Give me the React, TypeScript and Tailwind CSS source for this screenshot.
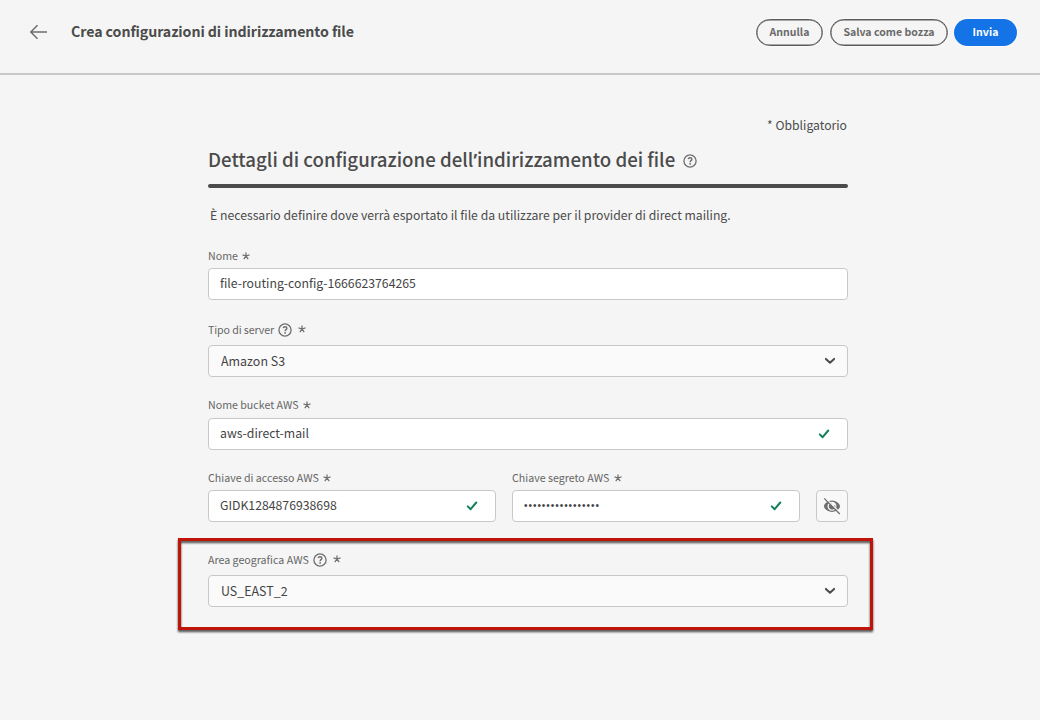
import type { ReactNode } from "react";

function HelpIcon({ className }: { className?: string }) {
  return (
    <svg viewBox="0 0 14 14" className={className} fill="none" stroke="#6e6e6e">
      <circle cx="7" cy="7" r="6.1" strokeWidth="1.3" />
      <path d="M5.2 5.1C5.4 4.2 6.1 3.8 7 3.8c1.1 0 1.9.6 1.9 1.5 0 1.3-1.8 1.4-1.8 2.9" strokeWidth="1.4" />
      <circle cx="7.1" cy="9.9" r="0.9" fill="#6e6e6e" stroke="none" />
    </svg>
  );
}

function Asterisk({ className = "" }: { className?: string }) {
  return (
    <svg viewBox="0 0 8 8" className={`h-2 w-2 ${className}`} fill="none" stroke="#6e6e6e" strokeWidth="1.25">
      <path d="M4 4V0.4M4 4L7.5 2.9M4 4L6.2 7.2M4 4L1.8 7.2M4 4L0.5 2.9" />
    </svg>
  );
}

function Check() {
  return (
    <svg viewBox="0 0 12 10" className="mt-0.5 h-2.5 w-3" fill="none" stroke="#12805c" strokeWidth="2">
      <path d="M1.8 5.4L4.6 8.2L10.3 1.5" strokeLinecap="round" strokeLinejoin="round" />
    </svg>
  );
}

function Chevron() {
  return (
    <svg viewBox="0 0 12 8" className="h-2 w-3" fill="none" stroke="#4b4b4b" strokeWidth="2">
      <path d="M1.9 1.9L6 5.7L10.1 1.9" strokeLinecap="round" strokeLinejoin="round" />
    </svg>
  );
}

function HiddenEye() {
  return (
    <svg viewBox="0 0 18 18" className="h-[18px] w-[18px]">
      <path
        fillRule="evenodd"
        fill="#6e6e6e"
        d="M9 3.4C5 3.4 1 6.7 1 9.2S5 14.9 9 14.9s8-3.2 8-5.7S13 3.4 9 3.4ZM9 4.7A4.5 4.5 0 1 1 9 13.7A4.5 4.5 0 1 1 9 4.7Z"
      />
      <path fill="#6e6e6e" d="M9 6a1.7 1.7 0 0 0 .9 2.9 1.7 1.7 0 0 0 2.2-.9A3.3 3.3 0 1 1 9 6Z" />
      <path d="M2.6 1.4L17 15.8" stroke="#f8f8f8" strokeWidth="1.4" />
      <path d="M1.2 1.4L16.8 17" stroke="#6e6e6e" strokeWidth="1.3" />
    </svg>
  );
}

function Label({ text, help = false, tracking = "" }: { text: string; help?: boolean; tracking?: string }) {
  return (
    <div className="flex h-4 items-center text-[10.65px] leading-4 text-[#666666]">
      <span className={`whitespace-nowrap ${tracking}`}>{text}</span>
      {help && <HelpIcon className="ml-1 h-3.5 w-3.5" />}
      <Asterisk className={help ? "mb-[3px] ml-1.5" : "ml-[4.5px]"} />
    </div>
  );
}

function Field({ children, valid = false }: { children: ReactNode; valid?: boolean }) {
  return (
    <div className="flex h-8 items-center justify-between rounded border border-[#c8c8c8] bg-white pr-[17px] pb-0.5 pl-[11px] text-[12.25px] leading-5 text-[#444444]">
      <span className="whitespace-nowrap">{children}</span>
      {valid && <Check />}
    </div>
  );
}

function Picker({ value }: { value: string }) {
  return (
    <div className="flex h-8 items-center justify-between rounded border border-[#c8c8c8] bg-[#fafafa] pr-[11px] pl-3 text-[12.45px] leading-5 text-[#444444]">
      <span>{value}</span>
      <Chevron />
    </div>
  );
}

export default function App() {
  return (
    <div className="h-[720px] w-[1040px] overflow-hidden bg-[#f5f5f5] font-['Noto_Sans_CJK_SC',sans-serif] text-[#4b4b4b]">
      <header className="flex h-[75px] items-start border-b-2 border-[#c8c8c8] pr-[23px] pl-[29px]">
        <svg viewBox="0 0 20 16" className="mt-6 h-4 w-5" fill="none" stroke="#6e6e6e" strokeWidth="1.5">
          <path d="M18 8H2M8.5 1.2L1.8 8L8.5 14.8" />
        </svg>
        <h1 className="mt-[21px] ml-[22px] text-[14.2px] leading-5 font-bold tracking-[-0.075px]">
          Crea configurazioni di indirizzamento file
        </h1>
        <div className="mt-[19px] ml-auto flex gap-[7px] text-[10.55px] leading-none font-bold">
          <button className="flex h-[27px] w-[67px] items-center justify-center rounded-full border border-[#5a5a5a] pb-px text-[#6a6a6a] shadow-[0_0_0_1px_#fafafa,inset_0_0_0_0.5px_#5a5a5a]">
            Annulla
          </button>
          <button className="flex h-[27px] w-[118px] items-center justify-center rounded-full border border-[#5a5a5a] pb-px whitespace-nowrap text-[#6a6a6a] shadow-[0_0_0_1px_#fafafa,inset_0_0_0_0.5px_#5a5a5a]">
            Salva come bozza
          </button>
          <button className="-ml-px flex h-[27px] w-[63px] items-center justify-center rounded-full bg-[#1473e6] pb-px text-white shadow-[0_0_0_1px_#fafafa]">
            Invia
          </button>
        </div>
      </header>

      <main className="ml-[208px] w-[640px] pt-10">
        <p className="pr-px text-right text-[12.2px] leading-5">* Obbligatorio</p>
        <div className="mt-[10px] flex h-[30px] items-center">
          <h2 className="text-[18.66px] leading-[30px] font-medium whitespace-nowrap">
            Dettagli di configurazione dell<span className="font-['Open_Sans'] text-[17px] font-bold">’</span>indirizzamento dei file
          </h2>
          <HelpIcon className="mt-0.5 ml-2 h-3.5 w-3.5" />
        </div>
        <div className="mt-[9px] h-1 rounded-sm bg-[#4b4b4b]" />
        <p className="mt-[17px] ml-0.5 text-[12.24px] leading-5 whitespace-nowrap">
          È necessario definire dove verrà esportato il file da utilizzare per il provider di direct mailing.
        </p>

        <div className="mt-[23px] flex flex-col gap-1">
          <Label text="Nome" />
          <Field>file-routing-config-1666623764265</Field>
        </div>
        <div className="mt-[22px] flex flex-col gap-[7px]">
          <Label text="Tipo di server" help tracking="tracking-[-0.1px]" />
          <Picker value="Amazon S3" />
        </div>
        <div className="mt-5 flex flex-col gap-[5px]">
          <Label text="Nome bucket AWS" />
          <Field valid>aws-direct-mail</Field>
        </div>
        <div className="mt-5 flex items-end gap-4">
          <div className="flex w-72 flex-col gap-1">
            <Label text="Chiave di accesso AWS" />
            <Field valid>GIDK1284876938698</Field>
          </div>
          <div className="flex w-72 flex-col gap-1">
            <Label text="Chiave segreto AWS" />
            <Field valid>
              <span className="font-['Liberation_Sans'] text-[10px] tracking-[0.96px]">•••••••••••••••••</span>
            </Field>
          </div>
          <button className="flex h-8 w-8 items-center justify-center rounded border border-[#c8c8c8] bg-[#f8f8f8]">
            <HiddenEye />
          </button>
        </div>
        <section className="relative mt-[30px] flex flex-col gap-[7px]">
          <div className="pointer-events-none absolute -top-[14px] -left-[30px] h-[92px] w-[695px] border-[3px] border-[#bf1508] drop-shadow-[0_2px_1px_rgba(0,0,0,0.7)]" />
          <Label text="Area geografica AWS" help />
          <Picker value="US_EAST_2" />
        </section>
      </main>
    </div>
  );
}
